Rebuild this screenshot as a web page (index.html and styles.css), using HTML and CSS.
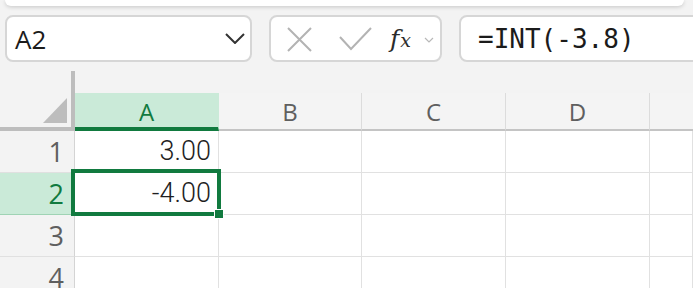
FILE: index.html
```html
<!DOCTYPE html>
<html>
<head>
<meta charset="utf-8">
<link rel="stylesheet" href="styles.css">
</head>
<body>
<div class="ribbon"></div>
<div class="formula-bar">
  <div class="namebox">
    <span class="name">A2</span>
    <svg class="chev" width="20" height="11" viewBox="0 0 20 11"><path d="M1 1 L10 10 L19 1" fill="none" stroke="#333" stroke-width="2"/></svg>
  </div>
  <div class="controls">
    <svg class="ic-x" width="25" height="25" viewBox="0 0 25 25"><path d="M1 1 L24 24 M24 1 L1 24" fill="none" stroke="#b3b3b3" stroke-width="2"/></svg>
    <svg class="ic-check" width="33" height="24" viewBox="0 0 33 24"><path d="M1 10 L12 22 L32 1" fill="none" stroke="#b3b3b3" stroke-width="2"/></svg>
    <span class="fx"><span class="fx-f">f</span><span class="fx-x">x</span></span>
    <svg class="ic-small" width="10" height="6" viewBox="0 0 10 6"><path d="M1 1 L5 5 L9 1" fill="none" stroke="#b8b8b8" stroke-width="1.2"/></svg>
  </div>
  <div class="formula">=INT(-3.8)</div>
</div>
<div class="splitter"><div class="handle"></div></div>
<div class="sheet">
  <div class="corner"><svg width="24" height="25" viewBox="0 0 24 25"><polygon points="24,0 24,25 0,25" fill="#bdbdbd"/></svg></div>
  <div class="colhead sel">A</div>
  <div class="colhead">B</div>
  <div class="colhead">C</div>
  <div class="colhead">D</div>
  <div class="colhead last"></div>

  <div class="rowhead">1</div>
  <div class="cell num">3.00</div>
  <div class="cell"></div>
  <div class="cell"></div>
  <div class="cell"></div>
  <div class="cell"></div>

  <div class="rowhead sel">2</div>
  <div class="cell num active">-4.00<div class="selection"></div><div class="fill-handle"></div></div>
  <div class="cell"></div>
  <div class="cell"></div>
  <div class="cell"></div>
  <div class="cell"></div>

  <div class="rowhead">3</div>
  <div class="cell"></div>
  <div class="cell"></div>
  <div class="cell"></div>
  <div class="cell"></div>
  <div class="cell"></div>

  <div class="rowhead">4</div>
  <div class="cell"></div>
  <div class="cell"></div>
  <div class="cell"></div>
  <div class="cell"></div>
  <div class="cell"></div>
</div>
</body>
</html>
```
FILE: styles.css
```css
html, body {
  margin: 0;
  padding: 0;
}
body {
  width: 693px;
  height: 288px;
  overflow: hidden;
  background: #f3f3f3;
  font-family: "Open Sans", "Noto Sans", sans-serif;
}
.ribbon {
  height: 6px;
  margin: 0 9px 0 5px;
  background: #ffffff;
  border-radius: 0 0 9px 9px;
  box-shadow: 0 1px 4px rgba(0, 0, 0, 0.18);
}
.formula-bar {
  display: flex;
  margin-top: 9px;
  height: 47px;
}
.namebox, .controls, .formula {
  box-sizing: border-box;
  height: 47px;
  background: #ffffff;
  border: 2px solid #d6d6d6;
  border-radius: 8px;
  display: flex;
  align-items: center;
}
.namebox {
  margin-left: 5px;
  width: 247px;
  padding-left: 8px;
}
.name {
  font-size: 26px;
  color: #1b1b1b;
  flex: 1;
  line-height: 1;
}
.chev {
  margin-right: 5px;
}
.controls {
  margin-left: 17px;
  width: 173px;
  padding-left: 16px;
}
.ic-x { margin-top: 1px; }
.ic-check { margin-left: 27px; margin-top: 0; }
.fx {
  margin-left: 18px;
  width: 23px;
  font-family: "DejaVu Serif", serif;
  font-style: italic;
  color: #2b2b2b;
  line-height: 1;
  display: flex;
  align-items: baseline;
}
.fx-f { font-size: 25px; }
.fx-x { font-size: 19px; margin-left: 1px; }
.ic-small { margin-left: 11px; margin-top: 2px; }
.formula {
  margin-left: 17px;
  flex: 1;
  margin-right: -20px;
  padding-left: 17px;
  font-family: "DejaVu Sans Mono", "Liberation Mono", monospace;
  font-size: 26px;
  color: #1b1b1b;
  line-height: 1;
}
.splitter {
  height: 31px;
  padding-top: 9px;
  box-sizing: border-box;
}
.handle {
  margin-left: 71px;
  width: 4px;
  height: 22px;
  background: #bdbdbd;
}
.sheet {
  display: grid;
  grid-template-columns: 75px 144px 143px 144px 144px 1fr;
  grid-template-rows: 38px 42px 42px 42px 42px;
}
.corner {
  box-sizing: border-box;
  border-right: 4px solid #bdbdbd;
  border-bottom: 4px solid #bdbdbd;
  display: flex;
  justify-content: flex-end;
  align-items: flex-end;
  padding: 0 4px 4px 0;
}
.corner svg { display: block; }
.colhead {
  box-sizing: border-box;
  border-right: 1px solid #dcdcdc;
  border-bottom: 2px solid #c4c4c4;
  background: #f4f4f4;
  color: #5f5f5f;
  font-size: 24px;
  display: flex;
  align-items: center;
  justify-content: center;
  line-height: 1;
  padding-top: 2px;
}
.colhead.sel {
  background: #caead8;
  color: #117a3f;
  border-bottom: 4px solid #117a3f;
  border-right: 1px solid #caead8;
  padding-top: 4px;
}
.colhead.last { border-right: none; }
.rowhead {
  box-sizing: border-box;
  border-right: 1px solid #d4d4d4;
  border-bottom: 1px solid #e0e0e0;
  background: #f3f3f3;
  color: #5f5f5f;
  font-size: 27px;
  line-height: 1;
  display: flex;
  align-items: center;
  justify-content: flex-end;
  padding-right: 10px;
}
.rowhead.sel {
  background: #caead8;
  color: #117a3f;
  border-bottom: 1px solid #9fd3b4;
}
.cell {
  box-sizing: border-box;
  background: #ffffff;
  border-right: 1px solid #e1e1e1;
  border-bottom: 1px solid #e1e1e1;
  font-family: Roboto, "Noto Sans", sans-serif;
  font-weight: 300;
  font-size: 27px;
  color: #1f1f1f;
  line-height: 1;
  display: flex;
  align-items: center;
  justify-content: flex-end;
  padding-right: 7px;
}
.cell.active {
  position: relative;
}
.selection {
  position: absolute;
  left: -4px;
  top: -4px;
  width: 150px;
  height: 47px;
  box-sizing: border-box;
  border: 4px solid #117a3f;
}
.fill-handle {
  position: absolute;
  left: 139px;
  top: 36px;
  width: 8px;
  height: 8px;
  background: #117a3f;
  border: 1px solid #ffffff;
}
```
